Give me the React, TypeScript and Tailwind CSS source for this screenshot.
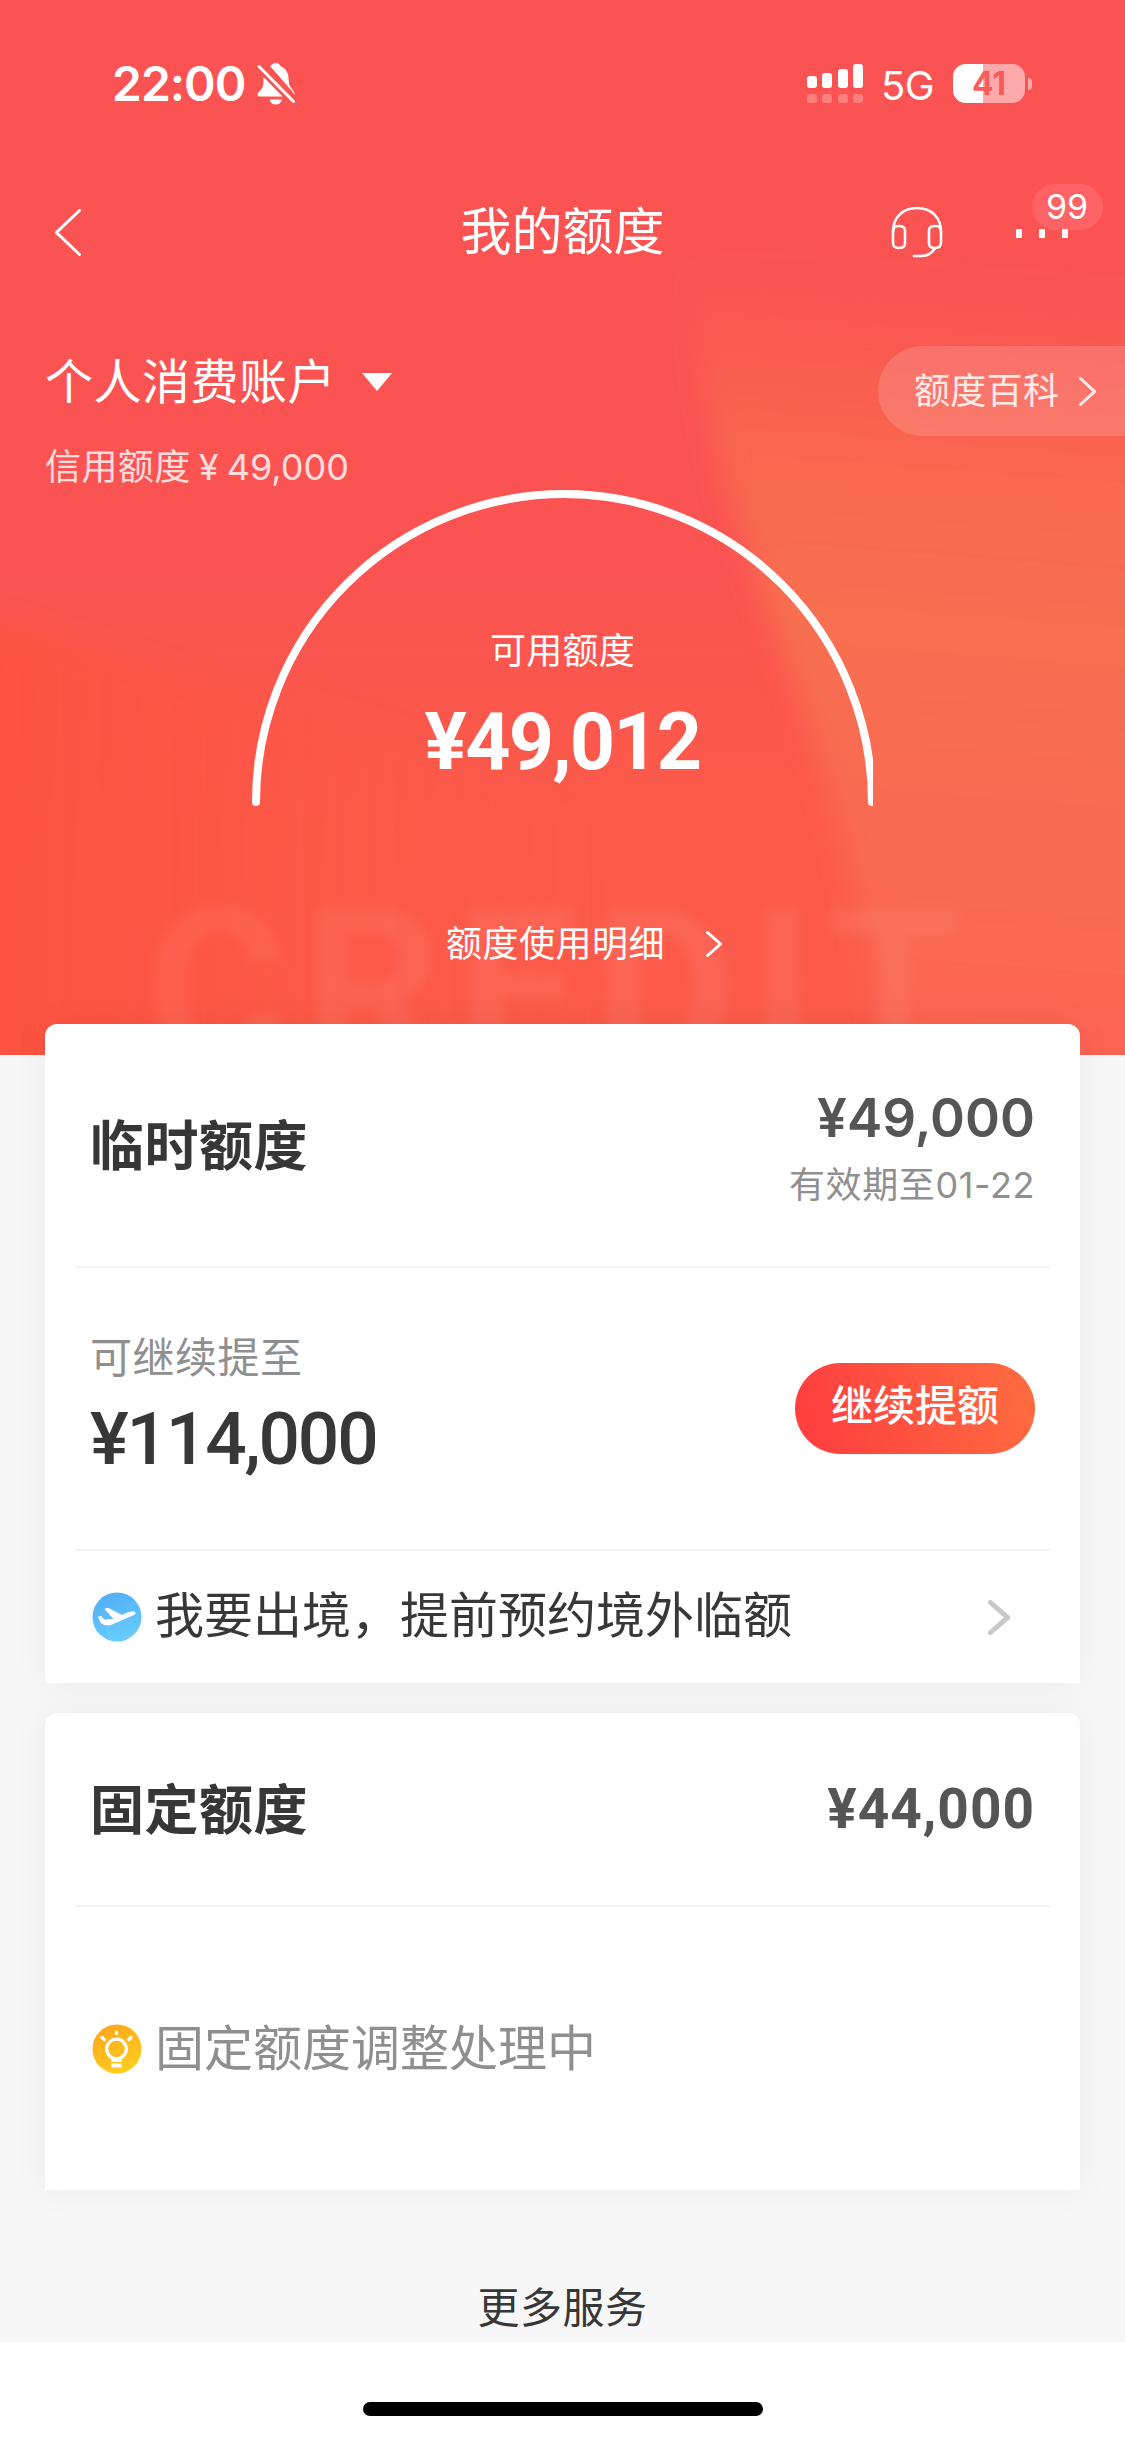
import { ReactNode } from 'react';

const BARS = [12, 15, 19, 24];

interface ChevronProps {
  width: number;
  height: number;
  stroke?: number;
  left?: boolean;
  className?: string;
}

function Chevron({ width, height, stroke = 3, left, className }: ChevronProps) {
  const p = stroke / 2;
  const points = left
    ? `${width - p},${p} ${p},${height / 2} ${width - p},${height - p}`
    : `${p},${p} ${width - p},${height / 2} ${p},${height - p}`;
  return (
    <svg width={width} height={height} className={className} fill="none" stroke="currentColor" strokeWidth={stroke} strokeLinecap="round">
      <polyline points={points} />
    </svg>
  );
}

function StatusBar() {
  return (
    <div className="h-[167px] pl-[112px] pr-[93px] flex items-start justify-between">
      <div className="mt-[58px] h-[52px] flex items-center">
        <span className="w-[145px] text-[48px] leading-[52px] font-semibold tracking-[-1px] whitespace-nowrap">22:00</span>
        <svg width="38" height="42" viewBox="0 0 38 42" className="shrink-0">
          <path d="M19 0c-3 0-5 2-5.600 3.600L34.500 27.500 37 31c1 1 .5 1 .5-1-1-2.500-5-6-5.500-10-.5-5-.5-8-2-11-1.500-3-4-5-6.500-5.700C22.900 1.500 21.500 0 19 0Z" fill="#fff" />
          <path d="M6.500 14 25.500 33.500H2.500C.5 33.500 0 31.500 1 30c2-2.500 5-4.500 5.300-9 .2-3 .1-5 .2-7Z" fill="#fff" />
          <path d="M12.500 36.500h12.500c-.8 3-3.200 5-6.200 5s-5.500-2-6.300-5Z" fill="#fff" />
          <path d="M2 3.500 36.500 38.500" stroke="#fff" strokeWidth="3" strokeLinecap="round" />
        </svg>
      </div>
      <div className="mt-[64px] flex items-start">
        <div className="flex gap-[5.300px]">
          {BARS.map(h => (
            <div key={h} className="w-[10px] flex flex-col">
              <div className="h-[24px] flex items-end">
                <div className="w-full rounded-[3px] bg-white" style={{ height: h }} />
              </div>
              <div className="mt-[6px] h-[9px] rounded-[3px] bg-white/25" />
            </div>
          ))}
        </div>
        <span className="ml-[18px] w-[72px] text-[40px] leading-[44px] tracking-[-0.500px]">5G</span>
        <div className="relative w-[72px] h-[39px] rounded-[13px] overflow-hidden bg-white/50">
          <div className="w-[30px] h-full bg-white" />
          <span className="absolute inset-0 text-center text-[32px] leading-[39px] font-bold text-[#f95a5a]">41</span>
        </div>
        <div className="ml-[3px] mt-[14px] w-[4px] h-[12px] rounded-r-full bg-white/50" />
      </div>
    </div>
  );
}

function NavBar() {
  return (
    <div className="h-[130px] flex items-center">
      <div className="flex-1 min-w-0">
        <Chevron left width={26} height={47} className="ml-[55px]" />
      </div>
      <h1 className="text-[51px] leading-[60px]">我的额度</h1>
      <div className="flex-1 min-w-0 h-full flex items-center">
        <svg width="52" height="52" viewBox="0 0 52 52" fill="none" stroke="#fff" strokeWidth="2.600" strokeLinecap="round" className="ml-[226px] shrink-0">
          <path d="M2 26C2 11 12 2 26 2s24 9 24 24" />
          <path d="M2 27c0-5 1-7 5.500-7s6.500 1.500 6.500 4.500v13c0 3-1.500 4.500-6 4.500s-6-2-6-5.500Z" />
          <path d="M50 27c0-5-1-7-5.500-7s-6.500 1.500-6.500 4.500v13c0 3 1.500 4.500 6 4.500s6-2 6-5.500Z" />
          <path d="M44 42.500c-3.500 5-8 7.500-13 7.500h-8" />
        </svg>
        <div className="relative ml-[73px] mt-[3px] flex gap-[17px] shrink-0">
          <i className="w-[6px] h-[9px] bg-white rounded-[1px]" />
          <i className="w-[6px] h-[9px] bg-white rounded-[1px]" />
          <i className="w-[6px] h-[9px] bg-white rounded-[1px]" />
          <span className="absolute left-[16px] -top-[45px] w-[71px] h-[46px] rounded-full bg-[#ff6365] text-center text-[34px] leading-[46px] -z-10">99</span>
        </div>
      </div>
    </div>
  );
}

function HeroArt() {
  return (
    <svg className="absolute inset-0 -z-20" width="1125" height="1055" viewBox="0 0 1125 1055">
      <defs>
        <linearGradient id="base" x1="0" y1="0" x2="0" y2="1">
          <stop offset="0" stopColor="#fb5353" />
          <stop offset=".52" stopColor="#fa5352" />
          <stop offset=".78" stopColor="#fc5a49" />
          <stop offset="1" stopColor="#fb5b4b" />
        </linearGradient>
        <linearGradient id="leftGlow" x1="0" y1="0" x2="1" y2="0">
          <stop offset="0" stopColor="#ff503f" />
          <stop offset="1" stopColor="#fc5a47" stopOpacity="0" />
        </linearGradient>
        <linearGradient id="rightGlow" gradientUnits="userSpaceOnUse" x1="980" y1="270" x2="920" y2="1055">
          <stop offset="0" stopColor="#fa5c50" stopOpacity="0" />
          <stop offset=".22" stopColor="#f96550" />
          <stop offset=".45" stopColor="#f86f50" />
          <stop offset=".75" stopColor="#f96a52" />
          <stop offset="1" stopColor="#fd6353" />
        </linearGradient>
        <filter id="soft" x="-20%" y="-20%" width="140%" height="140%">
          <feGaussianBlur stdDeviation="14" />
        </filter>
        <filter id="haze">
          <feGaussianBlur stdDeviation="4" />
        </filter>
      </defs>
      <rect width="1125" height="1055" fill="url(#base)" />
      <path d="M-60 610C40 630 120 660 230 690 330 720 450 730 600 830V1120H-60Z" fill="url(#leftGlow)" filter="url(#soft)" />
      <path d="M690 270C700 420 740 540 780 640 810 730 850 830 900 1120H1200V250Z" fill="url(#rightGlow)" filter="url(#soft)" />
      <text x="146" y="1066" textLength="830" lengthAdjust="spacingAndGlyphs" fontFamily="Roboto, sans-serif" fontSize="220" fontWeight="700" letterSpacing="16" fill="#fff" fillOpacity=".055" filter="url(#haze)">CREDIT</text>
    </svg>
  );
}

function Gauge({ children }: { children: ReactNode }) {
  return (
    <div className="relative w-[621px] h-[317px] ml-[252px] overflow-hidden flex flex-col items-center">
      <svg className="absolute inset-0" width="621" height="317" fill="none">
        <path d="M4 312A308 308 0 0 1 620 312" stroke="#fff" strokeWidth="8" strokeLinecap="round" />
      </svg>
      {children}
    </div>
  );
}

function Divider() {
  return <div className="mx-[30px] h-[2px] bg-[#f2f2f2]" />;
}

function PlaneIcon() {
  return (
    <svg width="50" height="50" viewBox="0 0 50 50" className="shrink-0">
      <defs>
        <linearGradient id="sky" x1="0" y1="0" x2=".3" y2="1">
          <stop offset="0" stopColor="#4fabf5" />
          <stop offset="1" stopColor="#66cbff" />
        </linearGradient>
      </defs>
      <circle cx="25" cy="25" r="24.500" fill="url(#sky)" />
      <path d="M6 24.500l3-.5 3.500 3.500 9-.5L12.500 17c1.500-1.500 4-1 6 0L30 23c4-2 8-4 12-3.500 2 .5 2 2.500 0 3.500L20 32.500c-4 1.500-8 1-10.500-1C8 30 7 27.500 6 24.500Z" fill="#fff" />
    </svg>
  );
}

function BulbIcon() {
  return (
    <svg width="50" height="50" viewBox="0 0 50 50" className="shrink-0" fill="none">
      <defs>
        <linearGradient id="sun" x1=".2" y1="0" x2=".7" y2="1">
          <stop offset="0" stopColor="#ffa51c" />
          <stop offset="1" stopColor="#ffcf1f" />
        </linearGradient>
      </defs>
      <circle cx="25" cy="25" r="24.500" fill="url(#sun)" />
      <circle cx="24.500" cy="25" r="9.800" stroke="#fff" strokeWidth="3.200" />
      <path d="M19.500 33.500v4.500h10v-4.500Z" fill="#fff" />
      <path d="M19.500 41.500h10" stroke="#fff" strokeWidth="4" />
      <path d="M24.500 8v1.500M10 13.500l2.200 2.200M39 13.500l-2.200 2.200" stroke="#fff" strokeWidth="3.200" strokeLinecap="round" />
    </svg>
  );
}

export default function App() {
  return (
    <div className="w-[1125px] h-[2439px] bg-white overflow-hidden text-[#373737] font-normal font-[Inter,'Noto_Sans_CJK_SC',sans-serif]">
      <div className="h-[2342px] bg-[#f7f7f7]">
        {/* Hero */}
        <header className="relative isolate h-[1055px] text-white">
          <HeroArt />
          <StatusBar />
          <NavBar />
          <div className="h-[193px] pt-[50px] pl-[45px] flex items-start justify-between">
            <div>
              <div className="flex items-center h-[70px]">
                <span className="text-[48px] leading-[70px] tracking-[0.500px]">个人消费账户</span>
                <svg width="30" height="18" className="ml-[26px]">
                  <path d="M0 0h30L15 18Z" fill="#fff" />
                </svg>
              </div>
              <p className="mt-[25px] text-[36px] leading-[50px] tracking-[0.400px] text-white/80">
                信用额度<span className="tracking-[0px] [word-spacing:-2px]"> ¥ 49,000</span>
              </p>
            </div>
            <button className="-mt-px w-[247px] h-[90px] pl-[36px] rounded-l-full bg-white/15 flex items-center text-white/85">
              <span className="text-[36px] tracking-[0.300px]">额度百科</span>
              <Chevron width={17} height={29} className="ml-[20px]" />
            </button>
          </div>
          <Gauge>
            <p className="mt-[136px] text-[36px] leading-[50px] tracking-[0.300px]">可用额度</p>
            <p className="mt-[23px] text-[79px] leading-[86px] font-bold tracking-[-1.800px] font-[Roboto,sans-serif]">¥49,012</p>
          </Gauge>
          <div className="mt-[112px] ml-[446px] flex items-center">
            <span className="text-[36px] leading-[50px] tracking-[0.500px]">额度使用明细</span>
            <Chevron width={16} height={26} className="ml-[41px]" />
          </div>
        </header>

        {/* Temporary limit */}
        <section className="relative -mt-[31px] mx-[45px] h-[659px] rounded-t-[12px] bg-white shadow-[0_0_36px_rgba(0,0,0,0.050)]">
          <div className="h-[242px] pl-[45px] pr-[45px] flex justify-between">
            <h2 className="mt-[83px] text-[54px] leading-[80px] tracking-[0.500px] font-semibold">临时额度</h2>
            <div className="mt-[64px] text-right">
              <p className="text-[53px] leading-[60px] font-semibold text-[#555]">¥49,000</p>
              <p className="mt-[12px] text-[36px] leading-[50px] tracking-[0.600px] text-[#8f8f8f]">有效期至01-22</p>
            </div>
          </div>
          <Divider />
          <div className="h-[281px] pl-[45px] pr-[45px] flex justify-between">
            <div>
              <p className="mt-[60px] text-[42px] leading-[60px] tracking-[0.500px] text-[#8f8f8f]">可继续提至</p>
              <p className="mt-[11px] text-[73px] leading-[80px] font-medium tracking-[-2.200px] font-[Roboto,sans-serif]">¥114,000</p>
            </div>
            <button className="mt-[95px] w-[240px] h-[91px] rounded-full bg-linear-[75deg,#ff403f_10%,#ff6b40_95%] text-white text-[42px] leading-[86px] pb-[5px] font-medium">
              继续提额
            </button>
          </div>
          <Divider />
          <div className="h-[132px] pl-[47px] pr-[70px] flex items-center">
            <PlaneIcon />
            <span className="ml-[13px] flex-1 text-[49px] leading-[70px] -mt-[3px]">我要出境，提前预约境外临额</span>
            <Chevron width={22} height={35} stroke={5} className="text-[#c8c8c8]" />
          </div>
        </section>

        {/* Fixed limit */}
        <section className="relative mt-[30px] mx-[45px] h-[477px] rounded-t-[12px] bg-white shadow-[0_0_36px_rgba(0,0,0,0.050)]">
          <div className="h-[192px] px-[45px] flex items-center justify-between">
            <h2 className="mt-[3px] text-[54px] leading-[80px] tracking-[0.500px] font-semibold">固定额度</h2>
            <p className="text-[55px] leading-[60px] font-bold tracking-[1px] text-[#555] font-[Roboto,sans-serif]">¥44,000</p>
          </div>
          <Divider />
          <div className="h-[283px] px-[47px] flex items-center">
            <BulbIcon />
            <span className="ml-[13px] text-[49px] leading-[70px] text-[#8f8f8f]">固定额度调整处理中</span>
          </div>
        </section>

        <p className="mt-[88px] text-center text-[42px] leading-[60px] tracking-[0.500px]">更多服务</p>
      </div>
      <div className="mt-[60px] mx-auto w-[400px] h-[14px] rounded-full bg-black" />
    </div>
  );
}
